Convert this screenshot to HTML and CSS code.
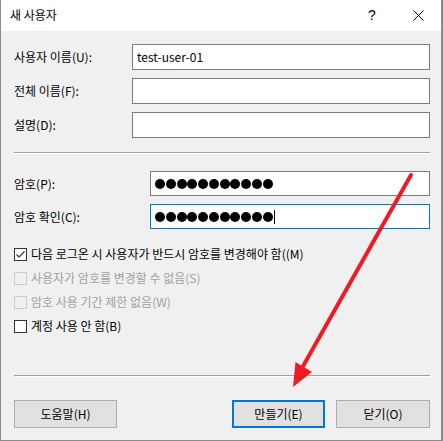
FILE: index.html
```html
<!DOCTYPE html>
<html>
<head>
  <meta charset="utf-8">
  <title>새 사용자</title>
  <link rel="stylesheet" href="styles.css">
</head>
<body>
  <div class="window">
    <div class="titlebar">
      <span class="title">새 사용자</span>
      <span class="help">?</span>
      <span class="close">
        <svg width="11" height="11" viewBox="0 0 11 11"><path d="M0.5 0.5 L10.5 10.5 M10.5 0.5 L0.5 10.5" stroke="#000" stroke-width="1"/></svg>
      </span>
    </div>

    <div class="content">
      <div class="fields user-fields">
        <label>사용자 이름(U):</label>
        <div class="field">test-user-01</div>
        <label>전체 이름(F):</label>
        <div class="field"></div>
        <label>설명(D):</label>
        <div class="field"></div>
      </div>

      <div class="separator"></div>

      <div class="fields pass-fields">
        <label>암호(P):</label>
        <div class="field dots">
          <span></span><span></span><span></span><span></span><span></span><span></span><span></span><span></span><span></span><span></span><span></span>
        </div>
        <label>암호 확인(C):</label>
        <div class="field dots focused">
          <span></span><span></span><span></span><span></span><span></span><span></span><span></span><span></span><span></span><span></span><span></span><i class="caret"></i>
        </div>
      </div>

      <div class="options">
        <div class="option">
          <span class="box"><svg width="11" height="11" viewBox="0 0 11 11"><path d="M1.5 5.5 L4 8 L9.5 2.5" fill="none" stroke="#333" stroke-width="1.2"/></svg></span>
          다음 로그온 시 사용자가 반드시 암호를 변경해야 함((M)
        </div>
        <div class="option disabled"><span class="box"></span>사용자가 암호를 변경할 수 없음(S)</div>
        <div class="option disabled"><span class="box"></span>암호 사용 기간 제한 없음(W)</div>
        <div class="option"><span class="box"></span>계정 사용 안 함(B)</div>
      </div>

      <div class="separator bottom-sep"></div>

      <div class="buttons">
        <button class="btn help-btn">도움말(H)</button>
        <div class="spacer"></div>
        <button class="btn default">만들기(E)</button>
        <button class="btn close-btn">닫기(O)</button>
      </div>
    </div>

    <!-- red arrow drawn over the dialog -->
    <svg class="arrow" width="443" height="441" viewBox="0 0 443 441">
      <line x1="411" y1="175" x2="302" y2="368" stroke="#ed1c24" stroke-width="4" stroke-linecap="round"/>
      <polygon points="293,387 295.5,362 312,372" fill="#ed1c24"/>
    </svg>
  </div>
</body>
</html>
```

FILE: styles.css
```css
body {
  margin: 0;
  padding: 0;
  font-family: "Noto Sans CJK KR", "Noto Sans", sans-serif;
  font-size: 12px;
  color: #000000;
  background-color: #ffffff;
}

.window {
  position: relative;
  width: 443px;
  height: 441px;
  box-sizing: border-box;
  border: 1px solid #8a8a8a;
  border-top: none;
  border-right-width: 2px;
  background-color: #f0f0f0;
  display: flex;
  flex-direction: column;
  overflow: hidden;
}

.titlebar {
  height: 31px;
  background-color: #ffffff;
  display: flex;
  align-items: center;
  padding-left: 9px;
}

.title {
  flex: 1;
  font-size: 12px;
  line-height: 16px;
  margin-top: -1px;
}

.help {
  font-family: "Liberation Sans", sans-serif;
  font-size: 14px;
  width: 20px;
  margin-right: 25px;
  margin-top: -1px;
}

.close {
  display: flex;
  margin-right: 17px;
  margin-top: -1px;
}

.content {
  flex: 1;
  padding: 13px 11px 11px 13px;
  display: flex;
  flex-direction: column;
}

.fields {
  display: grid;
  align-items: center;
  row-gap: 8px;
}

.user-fields {
  grid-template-columns: 118px 1fr;
  grid-auto-rows: 26px;
}

.pass-fields {
  grid-template-columns: 136px 1fr;
  grid-auto-rows: 25px;
  margin-top: 17px;
}

label {
  line-height: 16px;
}

.field {
  height: 100%;
  box-sizing: border-box;
  background-color: #ffffff;
  border: 1px solid #7a7a7a;
  padding: 0 4px;
  display: flex;
  align-items: center;
  line-height: 16px;
}

.field.focused {
  border-color: #0078d7;
}

.dots span {
  width: 10px;
  height: 10px;
  border-radius: 50%;
  background-color: #000000;
  margin-right: 0.75px;
  flex: none;
}

.caret {
  width: 1px;
  height: 14px;
  background-color: #000000;
  margin-left: 0.5px;
}

.separator {
  height: 1px;
  border-top: 1px solid #a0a0a0;
  border-bottom: 1px solid #ffffff;
  height: 0;
  margin-top: 14px;
}

.bottom-sep {
  margin-top: 37px;
}

.options {
  margin-top: 13px;
}

.option {
  height: 24px;
  display: flex;
  align-items: center;
  line-height: 16px;
}

.box {
  width: 13px;
  height: 13px;
  box-sizing: border-box;
  border: 1px solid #333333;
  background-color: #ffffff;
  margin-right: 4px;
  display: flex;
  align-items: center;
  justify-content: center;
}

.option.disabled {
  color: #a0a0a0;
}

.option.disabled .box {
  border-color: #cccccc;
  background-color: #f0f0f0;
}

.buttons {
  margin-top: 23px;
  display: flex;
  gap: 11px;
}

.spacer {
  flex: 1;
}

.btn {
  height: 28px;
  font-family: "Noto Sans CJK KR", "Noto Sans", sans-serif;
  font-size: 12px;
  color: #000000;
  background-color: #e1e1e1;
  border: 1px solid #adadad;
  padding: 0;
  line-height: 16px;
}

.help-btn {
  width: 103px;
}

.default {
  width: 93px;
  border: 2px solid #0078d7;
}

.close-btn {
  width: 94px;
}

.arrow {
  position: absolute;
  left: -1px;
  top: 0;
  pointer-events: none;
}
```
